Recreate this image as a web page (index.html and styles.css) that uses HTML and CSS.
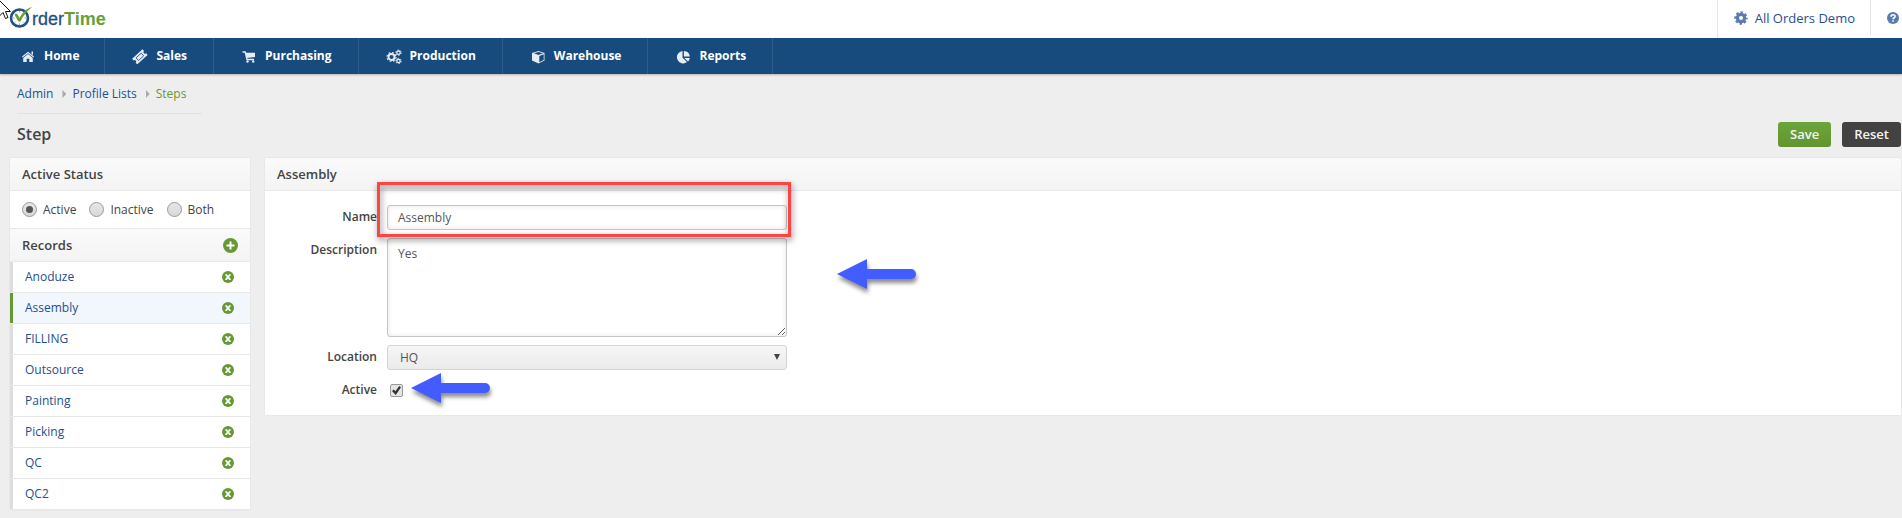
FILE: index.html
```html
<!DOCTYPE html>
<html lang="en">
<head>
<meta charset="utf-8">
<title>OrderTime - Step</title>
<link rel="stylesheet" href="styles.css">
</head>
<body>
<svg class="defs" width="0" height="0" aria-hidden="true">
  <defs>
    <symbol id="remove" viewBox="0 0 12 12"><circle cx="6" cy="6" r="6" fill="#669933"/><path d="M4 3.800L8 8.400M8 3.800L4 8.400" stroke="#fff" stroke-width="1.700" fill="none"/><path d="M3.200 3.800H5.200M7 3.800H8.800M3.200 8.500H5.200M7 8.500H8.800" stroke="#fff" stroke-width="0.900"/></symbol>
    <symbol id="arrow" viewBox="0 0 79 30"><path d="M0 15L30 0V10H74A5 5 0 0 1 74 20H30V30Z" fill="#425cff"/></symbol>
    <symbol id="gear" viewBox="0 0 14 14"><circle cx="7" cy="7" r="3.6" fill="none" stroke="currentColor" stroke-width="3.2"/><circle cx="7" cy="7" r="5.7" fill="none" stroke="currentColor" stroke-width="2" stroke-dasharray="2.5 1.977" stroke-dashoffset="1.25"/></symbol>
  </defs>
</svg>

<header class="topbar">
  <a class="logo" href="#" aria-label="OrderTime">
    <svg class="logo-mark" viewBox="0 0 24 22" width="24" height="22" aria-hidden="true">
      <circle cx="10.500" cy="12" r="8.500" fill="#fff" stroke="#235088" stroke-width="2.600"/>
      <path d="M10.500 5v1.500M3.700 12h1.800M15.500 12h1.800M10.500 17.300v1.600M5.800 7.300l1 1M5.800 16.700l1-1M15.200 16.700l-1-1" stroke="#8aa9c8" stroke-width="1"/>
      <path d="M5.500 8.500L8 7.500L10.500 12C13 7 17 3 23 1C18 5 14 10 11.300 15.500H9.300Z" fill="#66a030"/>
    </svg><span class="logo-order">rder</span><span class="logo-time">Time</span>
  </a>
  <div class="account">
    <a class="account-link" href="#"><svg width="14" height="14" aria-hidden="true"><use href="#gear"/></svg>All Orders Demo</a>
    <a class="help-link" href="#" aria-label="Help"><svg width="12" height="12" viewBox="0 0 12 12" aria-hidden="true"><circle cx="6" cy="6" r="6" fill="currentColor"/><path d="M4 4.700C4 2.200 8.100 2.300 8.100 4.400C8.100 5.800 6.100 5.700 6.100 7.200M6.100 8.300V9.800" fill="none" stroke="#fff" stroke-width="1.600"/></svg></a>
  </div>
</header>

<nav class="nav">
  <a href="#"><svg viewBox="0 0 16 16" aria-hidden="true"><path d="M2 8.500L8 3.700L14 8.500L13.300 9.400L8 5.200L2.700 9.400ZM11.500 3.500H13V7L11.500 5.800ZM8 6.100L12.800 10V14H9.300V10.800H6.700V14H3.200V10Z" fill="currentColor"/></svg>Home</a>
  <a href="#"><svg viewBox="0 0 16 16" aria-hidden="true"><g transform="rotate(-42 8 9)"><path d="M1 5H15V7.300A1.500 1.500 0 0 0 15 10.300V12.600H1V10.300A1.500 1.500 0 0 0 1 7.300Z" fill="currentColor"/><rect x="4.500" y="7" width="7" height="3.600" fill="none" stroke="#184b7d" stroke-width="0.800"/></g></svg>Sales</a>
  <a href="#"><svg viewBox="0 0 16 16" aria-hidden="true"><path d="M1.500 4H4.200L6 11.500H13" fill="none" stroke="currentColor" stroke-width="1.300"/><path d="M4.600 4.800H14V9L5.600 10Z" fill="currentColor"/><circle cx="6.500" cy="13.500" r="1.200" fill="currentColor"/><circle cx="12.200" cy="13.500" r="1.200" fill="currentColor"/></svg>Purchasing</a>
  <a href="#"><svg viewBox="0 0 16 16" aria-hidden="true"><g fill="none" stroke="currentColor"><circle cx="5.500" cy="9" r="3" stroke-width="1.900"/><circle cx="5.500" cy="9" r="4.500" stroke-width="1.200" stroke-dasharray="1.800 1.734"/><circle cx="12.500" cy="4.700" r="1.700" stroke-width="1.300"/><circle cx="12.500" cy="4.700" r="2.700" stroke-width="1" stroke-dasharray="1.400 1.427"/><circle cx="12.500" cy="13" r="1.700" stroke-width="1.300"/><circle cx="12.500" cy="13" r="2.700" stroke-width="1" stroke-dasharray="1.400 1.427"/></g></svg>Production</a>
  <a href="#"><svg viewBox="0 0 16 16" aria-hidden="true"><path d="M8.500 3L14.500 5V12.500L8.500 15.500L2 12.500V5Z" fill="currentColor"/><path d="M4 5.200L8.500 3.900L13 5.200L8.500 7ZM9.300 8L13.700 6.300V12L9.300 14.200Z" fill="#184b7d"/></svg>Warehouse</a>
  <a href="#"><svg viewBox="0 0 16 16" aria-hidden="true"><path d="M7.500 3V9.700L12 14A6.200 6.200 0 1 1 7.500 3ZM8.900 3A6.200 6.200 0 0 1 14.800 8.600H8.900ZM9.300 9.900H14.800A6.200 6.200 0 0 1 13 13.400Z" fill="currentColor"/></svg>Reports</a>
</nav>

<main class="page">
  <nav class="crumbs" aria-label="Breadcrumb"><a href="#">Admin</a><a href="#">Profile Lists</a><a class="current" href="#">Steps</a></nav>
  <div class="titlebar">
    <h1>Step</h1>
    <div class="actions">
      <button class="btn save" type="submit" form="step-form">Save</button>
      <button class="btn reset" type="reset" form="step-form">Reset</button>
    </div>
  </div>

  <div class="columns">
    <aside class="panel sidebar">
      <h2 class="panel-head">Active Status</h2>
      <div class="status">
        <label><input type="radio" name="status" checked>Active</label>
        <label><input type="radio" name="status">Inactive</label>
        <label><input type="radio" name="status">Both</label>
      </div>
      <div class="panel-head records-head">
        <h2>Records</h2>
        <button class="icon-btn" type="button" aria-label="Add record"><svg width="15" height="15" viewBox="0 0 15 15" aria-hidden="true"><circle cx="7.500" cy="7.500" r="7.500" fill="#669933"/><path d="M3.500 7.500H11.500M7.500 3.500V11.500" stroke="#fff" stroke-width="2"/></svg></button>
      </div>
      <ul class="records">
        <li><a href="#">Anoduze</a><button class="icon-btn" type="button" aria-label="Remove Anoduze"><svg width="12" height="12"><use href="#remove"/></svg></button></li>
        <li class="selected"><a href="#">Assembly</a><button class="icon-btn" type="button" aria-label="Remove Assembly"><svg width="12" height="12"><use href="#remove"/></svg></button></li>
        <li><a href="#">FILLING</a><button class="icon-btn" type="button" aria-label="Remove FILLING"><svg width="12" height="12"><use href="#remove"/></svg></button></li>
        <li><a href="#">Outsource</a><button class="icon-btn" type="button" aria-label="Remove Outsource"><svg width="12" height="12"><use href="#remove"/></svg></button></li>
        <li><a href="#">Painting</a><button class="icon-btn" type="button" aria-label="Remove Painting"><svg width="12" height="12"><use href="#remove"/></svg></button></li>
        <li><a href="#">Picking</a><button class="icon-btn" type="button" aria-label="Remove Picking"><svg width="12" height="12"><use href="#remove"/></svg></button></li>
        <li><a href="#">QC</a><button class="icon-btn" type="button" aria-label="Remove QC"><svg width="12" height="12"><use href="#remove"/></svg></button></li>
        <li><a href="#">QC2</a><button class="icon-btn" type="button" aria-label="Remove QC2"><svg width="12" height="12"><use href="#remove"/></svg></button></li>
      </ul>
    </aside>

    <section class="panel detail">
      <h2 class="panel-head">Assembly</h2>
      <form class="form" id="step-form">
        <label for="name">Name</label>
        <div class="field"><input class="text" id="name" type="text" value="Assembly"><span class="highlight"></span></div>
        <label for="description">Description</label>
        <div class="field"><textarea class="text area" id="description">Yes</textarea><svg class="pointer beside-field" width="79" height="30" aria-hidden="true"><use href="#arrow"/></svg></div>
        <label for="location">Location</label>
        <div class="field select"><select id="location"><option>HQ</option></select></div>
        <label for="active">Active</label>
        <div class="field check"><input id="active" type="checkbox" checked><svg class="pointer beside-check" width="79" height="30" aria-hidden="true"><use href="#arrow"/></svg></div>
      </form>
    </section>
  </div>
</main>

<svg class="cursor" width="12" height="20" viewBox="0 0 12 20" aria-hidden="true"><path d="M0.500 0.500V16L4 12.500L6.500 18.500L9 17.500L6.500 11.500H11.500Z" fill="#fff" stroke="#111"/></svg>
</body>
</html>
```

FILE: styles.css
```css
* {
  box-sizing: border-box;
}

body {
  margin: 0;
  background: #eee;
  color: #444;
  font: 12px/18px "Open Sans", "Noto Sans", sans-serif;
}

a {
  color: #1f4f8f;
  text-decoration: none;
}

h1,
h2 {
  margin: 0;
  font-weight: 600;
}

input,
textarea,
select,
button {
  margin: 0;
  font: inherit;
  color: inherit;
}

.defs {
  position: absolute;
}

.cursor {
  position: absolute;
  top: 0;
  left: -1px;
}

/* Top bar */
.topbar {
  display: flex;
  justify-content: space-between;
  height: 38px;
  background: #fff;
}

.logo {
  display: flex;
  align-items: center;
  padding-left: 9px;
  font: 18px/20px "Liberation Sans", Arial, sans-serif;
}

.logo-mark {
  margin-right: -1px;
  margin-bottom: 5px;
}

.logo-order {
  color: #235088;
  -webkit-text-stroke: 0.3px #235088;
}

.logo-time {
  color: #669f33;
  font-weight: bold;
}

.account {
  display: flex;
  align-items: flex-start;
  color: #5b7bb0;
  font-size: 13px;
}

.account a {
  display: flex;
  align-items: center;
  border-left: 1px solid #e4e4e4;
}

.account svg {
  color: #5b7bb0;
}

.account-link {
  gap: 7px;
  height: 38px;
  padding: 0 15px 2px 16px;
}

.help-link {
  height: 35px;
  padding: 0 3px 0 16px;
}

/* Main navigation */
.nav {
  display: flex;
  height: 36px;
  background: #184b7d;
  box-shadow: 0 1px 2px rgba(0, 0, 0, 0.25);
}

.nav a {
  display: flex;
  align-items: center;
  gap: 8px;
  padding: 0 26px 0 27px;
  border-right: 1px solid #2f5d8b;
  color: #fff;
  font-weight: 700;
}

.nav a:first-child {
  padding: 0 25px 0 20px;
}

.nav svg {
  width: 16px;
  height: 16px;
  color: #e6ecf3;
}

/* Page heading */
.page {
  padding: 11px 1px 9px 10px;
}

.crumbs {
  display: flex;
  width: 185px;
  height: 29px;
  margin-left: 7px;
  border-bottom: 1px solid #e2e2e2;
}

.crumbs a {
  display: flex;
  align-items: center;
  height: 18px;
}

.crumbs a + a::before {
  content: "";
  width: 4px;
  height: 8px;
  margin: 0 6px 0 9px;
  background: #aaa;
  clip-path: polygon(0 0, 100% 50%, 0 100%);
}

.crumbs .current {
  color: #669933;
}

.titlebar {
  display: flex;
  align-items: center;
  justify-content: space-between;
  height: 44px;
  padding: 0 0 4px 7px;
}

h1 {
  font-size: 16px;
}

.actions {
  display: flex;
  gap: 11px;
}

.btn {
  height: 25px;
  padding: 0 12px;
  border: 0;
  border-radius: 3px;
  color: #f4f4f4;
  font-size: 13px;
  font-weight: 600;
}

.save {
  background: linear-gradient(#6ba539, #639431);
}

.reset {
  background: #424242;
}

/* Panels */
.columns {
  display: grid;
  grid-template-columns: 240px 1fr;
  align-items: start;
  gap: 15px;
}

.panel {
  background: #fff;
  box-shadow: 0 0 1px rgba(0, 0, 0, 0.15);
}

.panel-head {
  height: 33px;
  padding: 0 12px;
  border-bottom: 1px solid #e8e8e8;
  background: linear-gradient(#fafafa, #f4f4f4);
  font-size: 13px;
  font-weight: 600;
  line-height: 32px;
}

.status {
  display: flex;
  gap: 13px;
  height: 38px;
  padding: 0 12px;
  border-bottom: 1px solid #e8e8e8;
}

.status label {
  display: flex;
  align-items: center;
  gap: 6px;
}

.status input {
  appearance: none;
  display: grid;
  place-items: center;
  width: 15px;
  height: 15px;
  border: 1px solid #999;
  border-radius: 50%;
  background: linear-gradient(#e6e6e6, #d8d8d8);
}

.status input:checked::before {
  content: "";
  width: 7px;
  height: 7px;
  border-radius: 50%;
  background: #555;
}

.records-head {
  display: flex;
  align-items: center;
  justify-content: space-between;
}

.records-head h2 {
  font-size: 13px;
}

.icon-btn {
  display: flex;
  padding: 0;
  border: 0;
  background: none;
}

.records {
  margin: 0;
  padding: 0;
  list-style: none;
}

.records li {
  display: flex;
  align-items: center;
  justify-content: space-between;
  height: 31px;
  padding: 0 16px 0 12px;
  border-bottom: 1px solid #e8e8e8;
  box-shadow: inset 3px 0 #ddd;
}

.records li a {
  padding-left: 3px;
}

.records .selected {
  background: #f2f6fd;
  box-shadow: inset 3px 0 #669933;
}

/* Record form */
.form {
  display: grid;
  grid-template-columns: 112px minmax(0, 400px);
  gap: 8px 10px;
  padding: 14px 0 12px;
}

.form > label {
  font-weight: 600;
  line-height: 24px;
  text-align: right;
}

.field {
  display: flex;
  position: relative;
  min-height: 25px;
}

.text {
  width: 100%;
  padding: 0 10px;
  border: 1px solid #c4c4c4;
  border-radius: 3px;
  background: #fff;
  box-shadow: inset 0 0 5px rgba(0, 0, 0, 0.1);
  color: #555;
}

.area {
  height: 99px;
  padding: 6px 10px;
  resize: vertical;
}

.select select {
  appearance: none;
  width: 100%;
  padding: 0 12px;
  border: 1px solid #d4d4d4;
  border-radius: 3px;
  background: linear-gradient(#f6f6f6, #ebebeb);
  color: #555;
}

.select::after {
  content: "";
  position: absolute;
  top: 9px;
  right: 7px;
  width: 6px;
  height: 6px;
  background: #444;
  clip-path: polygon(0 0, 100% 0, 50% 100%);
  pointer-events: none;
}

.check {
  align-items: center;
  padding-left: 3px;
}

.check input {
  appearance: none;
  display: grid;
  place-items: center;
  width: 13px;
  height: 13px;
  border: 1px solid #999;
  border-radius: 2px;
  background: #e4e4e4;
}

.check input:checked::before {
  content: "";
  width: 9px;
  height: 9px;
  background: #333;
  clip-path: polygon(0 55%, 20% 38%, 38% 58%, 80% 0, 100% 14%, 42% 100%);
}

/* Callouts drawn over the form */
.highlight {
  position: absolute;
  inset: -23px -4px -7px -10px;
  border: 3px solid #ff4444;
  filter: drop-shadow(1px 3px 3px rgba(0, 0, 0, 0.5));
  pointer-events: none;
  z-index: 1;
}

.pointer {
  position: absolute;
  overflow: visible;
  filter: drop-shadow(1px 4px 2px rgba(0, 0, 0, 0.45));
}

.beside-field {
  top: 21px;
  left: calc(100% + 50px);
}

.beside-check {
  top: -5px;
  left: 24px;
}
```
